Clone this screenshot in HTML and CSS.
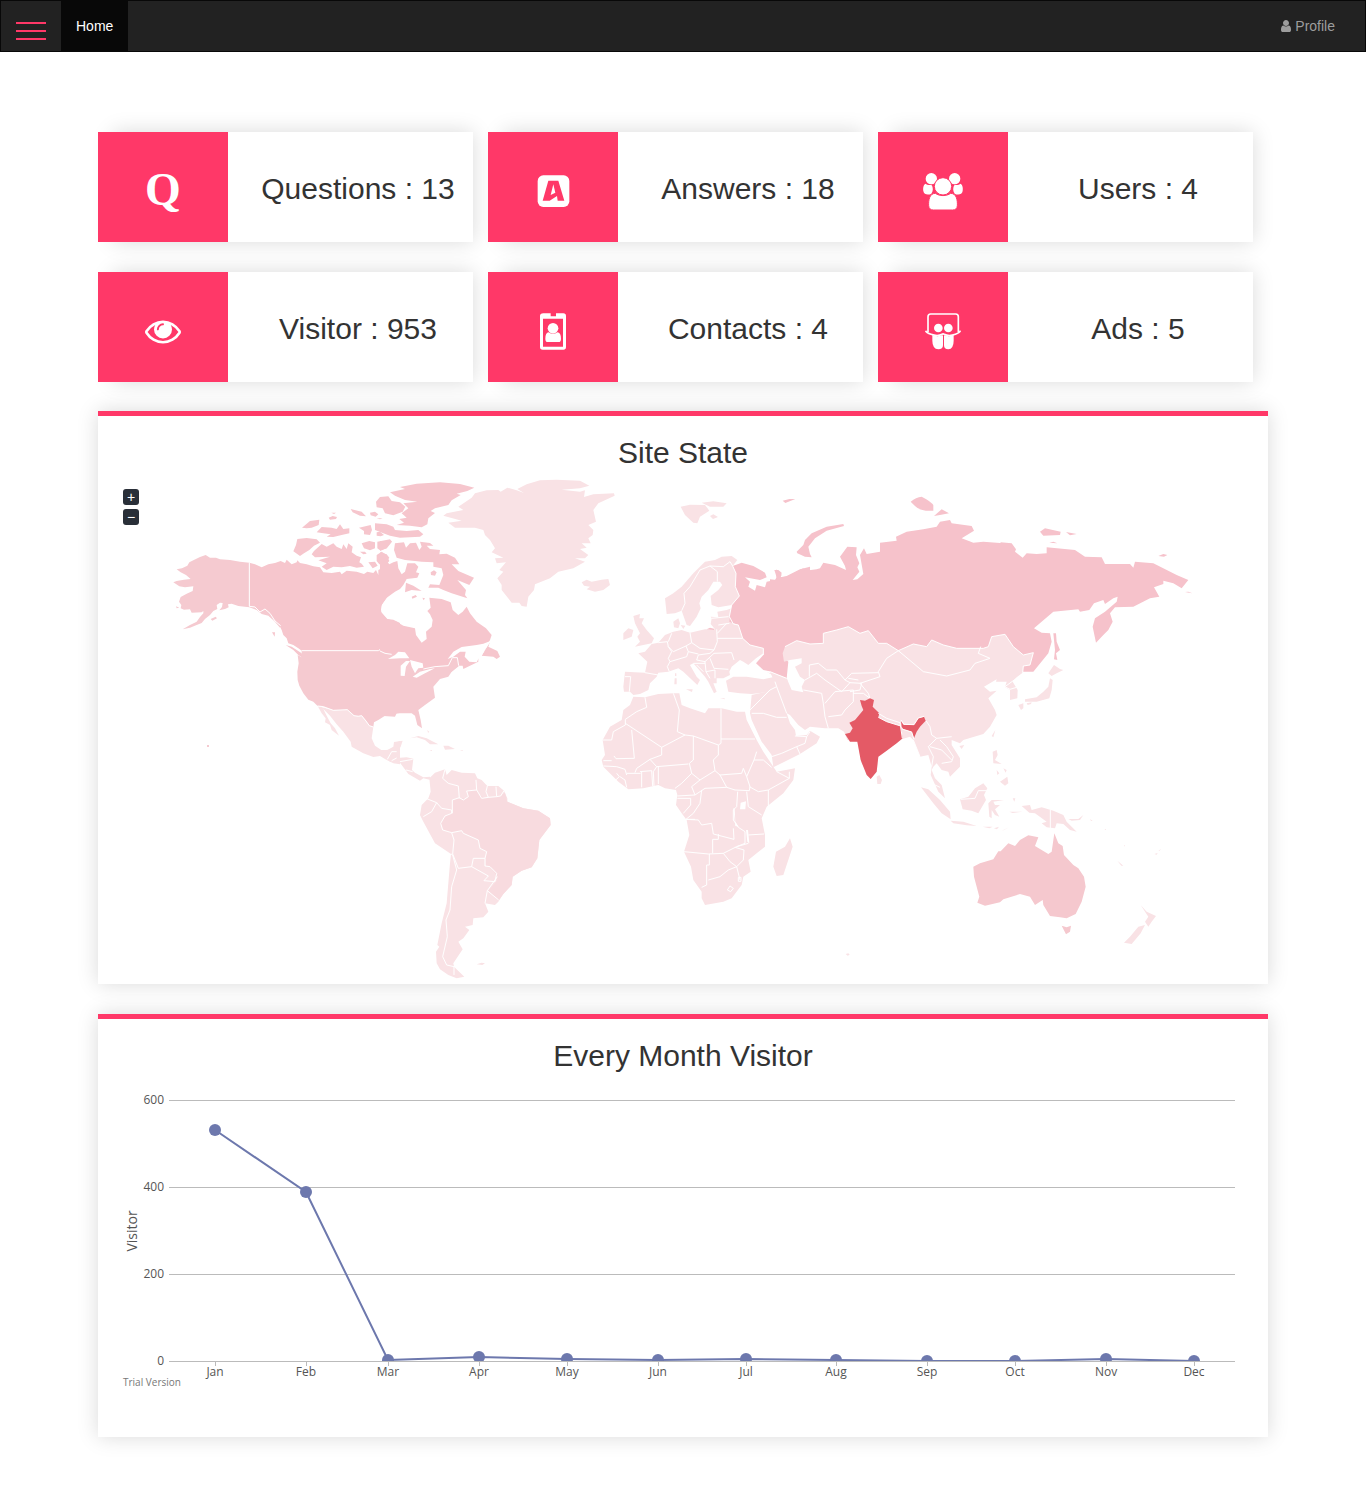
FILE: index.html
```
<!DOCTYPE html>
<html lang="en">
<head>
<meta charset="utf-8">
<title>Dashboard</title>
<meta name="viewport" content="width=device-width, initial-scale=1">
<link rel="stylesheet" href="styles.css">
</head>
<body>
<nav class="navbar">
  <button class="menu-toggle" type="button" aria-label="Menu"><span></span><span></span><span></span></button>
  <a class="nav-link active" href="#">Home</a>
  <a class="nav-link profile" href="#"><svg class="user-icon" viewBox="256 128 1280 1536" aria-hidden="true"><path d="M1536 1399q0 109-62.5 187t-150.5 78h-854q-88 0-150.5-78t-62.5-187q0-85 8.5-160.5t31.5-152 58.5-131 94-89 134.500-34.500q131 128 313 128t313-128q76 0 134.500 34.500t94 89 58.500 131 31.500 152 8.500 160.500zm-256-887q0 159-112.500 271.500t-271.500 112.500-271.500-112.500-112.500-271.500 112.500-271.500 271.500-112.500 271.500 112.500 112.500 271.500z"/></svg> Profile</a>
</nav>

<main class="container">
  <section class="stats">
    <article class="card">
      <div class="card-icon"><span class="letter-icon">Q</span></div>
      <h2 class="card-text">Questions : 13</h2>
    </article>
    <article class="card">
      <div class="card-icon"><svg viewBox="-7 0 120 120" aria-hidden="true"><rect x="7" y="16" width="95" height="95" rx="17"/><path class="cut" d="M39 32H69L87 92H67L65 78L43 92H22ZM54 43L46 75L60 68Z" fill-rule="evenodd"/></svg></div>
      <h2 class="card-text">Answers : 18</h2>
    </article>
    <article class="card">
      <div class="card-icon"><svg viewBox="0 -4 120 120" aria-hidden="true"><path d="M7 37C0 42 0 53 1 59C2 70 16 72 25 67C31 59 31 47 25 40C18 42 12 40 7 37ZM113 37C120 42 120 53 119 59C118 70 104 72 95 67C89 59 89 47 95 40C102 42 108 40 113 37Z"/><circle cx="25" cy="22" r="17"/><circle cx="95" cy="22" r="17"/><path class="ring" d="M37 66C50 75 70 75 83 66C101 66 104 88 103 103Q102 116 89 116H31Q18 116 17 103C16 88 19 66 37 66Z"/><circle class="ring" cx="60" cy="45" r="26"/></svg></div>
      <h2 class="card-text">Users : 4</h2>
    </article>
    <article class="card">
      <div class="card-icon"><svg class="eye" viewBox="0 -36 1792 1792" aria-hidden="true"><path d="M1664 960q-152-236-381-353 61 104 61 225 0 185-131.500 316.500t-316.500 131.500-316.500-131.500-131.500-316.500q0-121 61-225-229 117-381 353 133 205 333.500 326.500t434.500 121.500 434.500-121.500 333.500-326.500zm-720-384q0-20-14-34t-34-14q-125 0-214.500 89.500t-89.500 214.500q0 20 14 34t34 14 34-14 14-34q0-86 61-147t147-61q20 0 34-14t14-34zm848 384q0 34-20 69-140 230-376.500 368.500t-499.500 138.500-499.500-139-376.500-368q-20-35-20-69t20-69q140-229 376.500-368t499.500-139 499.500 139 376.500 368q20 35 20 69z"/></svg></div>
      <h2 class="card-text">Visitor : 953</h2>
    </article>
    <article class="card">
      <div class="card-icon"><svg viewBox="-6 -3 120 120" aria-hidden="true"><path fill-rule="evenodd" d="M25 7H47V16H63V7H85Q93 7 93 15V108Q93 116 85 116H23Q15 116 15 108V15Q15 7 25 7ZM24 23V107H84V23Z"/><circle cx="54" cy="52" r="16"/><path d="M41 64Q54 74 67 64Q78 65 78 83Q78 93 71 93H38Q31 93 31 83Q31 65 41 64Z"/></svg></div>
      <h2 class="card-text">Contacts : 4</h2>
    </article>
    <article class="card">
      <div class="card-icon"><svg viewBox="0 0 120 120" aria-hidden="true"><path class="line" d="M15 66V20Q15 12 23 12H98Q106 12 106 20V66M8 62Q10 68 24 73Q44 80 57 73Q60 70 64 73Q78 80 97 73Q111 68 112 62"/><path d="M28 75Q44 82 58 75L60 78V106Q60 118 46 118Q28 116 28 92ZM92 75Q77 82 65 75L63 78V106Q63 118 76 118Q92 116 92 92Z"/><circle cx="46" cy="54" r="13"/><circle cx="76" cy="54" r="13"/></svg></div>
      <h2 class="card-text">Ads : 5</h2>
    </article>
  </section>

  <section class="panel">
    <h2 class="panel-title">Site State</h2>
    <div class="map">
      <div class="zoom"><button type="button" aria-label="Zoom in">+</button><button type="button" aria-label="Zoom out">−</button></div>
      <svg class="drawing" viewBox="113 479 1140 500" role="img" aria-label="World map of visitors">
        <!-- Western North America -->
        <g transform="translate(160 475) scale(.333333)">
          <g class="canada">
            <path d="M268 263L285 268 305 277 325 268 345 264 362 258 375 264 380 254 395 268 410 262 412 256 420 264 440 268 460 274 480 277 490 292 515 294 540 290 545 298 560 287 590 290 612 297 622 290 640 294 648 285 655 300 655 285 668 278 670 290 680 297 695 280 705 268 712 285 720 288 720 340 700 348 692 356 680 368 668 384 662 395 664 412 680 432 700 434 720 444 720 536 700 535 680 530 668 532 660 524 655 528 425 527 415 520 400 510 385 505 380 490 370 480 365 465 360 455 345 440 330 420 315 404 300 412 285 396 268 394Z"/>
            <path d="M377 510L395 515 410 525 425 535 428 548 415 540 400 525ZM336 472H345L344 485ZM412 192L440 189 470 193 480 203 462 212 448 225 432 235 420 243 400 229 408 210ZM485 207L500 215 520 205 530 215 545 222 550 208 560 222 565 205 578 215 575 232 590 242 603 247 598 262 605 266 612 275 590 278 570 273 545 277 520 275 500 285 485 275 500 265 475 256 510 245 465 247 455 238 462 228Z"/>
            <path d="M426 158L450 138 478 134 476 150 455 158 440 160ZM470 172L485 156 515 158 530 162 540 148 550 162 568 160 568 175 545 180 520 186 500 185 512 178 490 175ZM514 113h14l-6 4zM506 128l12-5 13 3-3 6-18 2zM572 102L605 110 618 124 600 122 578 112zM630 113l15-3 10 8-8 7-15-4zM597 158L632 150 636 165 630 180 612 178 612 168zM650 172l10-2 12 10-10 4-12-2zM605 205L628 198 645 202 645 220 630 226 612 220zM652 200L690 193 696 200 680 220 660 226 652 220zM600 230h15l5 6-10 2zM625 262l20-2 8 12-15 8zM650 240L665 230 680 240 688 258 675 272 658 268 650 258zM650 130h18l-8 3z"/>
          </g>
          <g class="usa">
            <path d="M268 263L240 260 210 255 180 253 168 248 150 248 137 240 120 246 100 256 88 262 82 272 66 280 50 283 62 292 78 300 92 312 72 314 50 318 40 322 58 334 75 337 100 334 98 348 80 356 62 366 57 380 64 390 62 400 72 404 90 403 95 413 125 412 130 408 130 415 120 426 110 440 90 450 68 463 90 458 110 450 125 444 135 432 150 420 160 408 172 402 170 390 180 383 188 384 186 396 178 406 195 402 206 397 204 388 215 386 235 393 268 397 290 405 305 417 325 422 345 440 360 458 362 450 345 440 330 415 315 402 300 410 285 396 268 394ZM152 432l15-7 4 5-14 7zM141 810h6v6h-6zM48 394l10 4-8 2z"/>
            <path d="M425 527L655 528 660 524 668 532 690 540 684 552 700 555 720 545 720 714 705 716 700 722 675 722 655 735 642 742 640 756 628 752 618 738 605 722 595 724 582 722 562 704 545 706 520 706 490 695 473 693 460 680 445 674 430 655 418 632 413 615 412 590 416 565 413 540 425 547Z"/>
          </g>
          <path class="land" d="M473 693L520 706 562 704 582 722 605 722 628 752 640 756 635 790 645 812 665 826 690 824 703 815 706 803 720 798 720 868 700 865 680 855 660 843 640 846 610 835 575 815 572 800 550 770 530 748 510 722 490 702 500 722 512 745 525 760 537 782 515 765 510 750 495 742 497 730 485 715Z"/>
          <path class="border" d="M268 263V394L285 396 300 411 315 402 330 415 345 438 362 452M425 527H655L660 524 668 532 700 535M473 693L490 695 520 706 562 704 582 722 595 724 605 722 618 738 628 752 640 756"/>
        </g>
        <!-- Eastern North America and Greenland -->
        <g transform="translate(380 475) scale(.333333)">
          <g class="canada">
            <path d="M30 52L75 42 60 36 110 26 180 22 240 27 283 38 262 48 230 56 242 60 215 76 205 90 165 100 152 108 165 114 145 130 142 148 125 157 90 152 50 150 72 143 58 132 80 128 65 115 85 100 70 85 112 80 75 75 45 62ZM0 66L25 64 35 78 60 82 76 95 68 110 40 121 15 115 8 100-10 97-12 80ZM-15 145L20 148 40 155 45 165 80 168 115 165 130 178 120 185 60 188 30 182 10 175-15 165ZM0 198L35 198 20 220 0 228Z"/>
            <path d="M45 205L72 202 78 218 90 205 108 203 118 225 125 215 120 200 150 204 160 212 140 212 150 222 180 225 178 238 200 236 225 248 238 268 215 268 235 288 282 308 268 330 232 315 258 345 255 360 262 370 215 355 190 345 175 338 145 338 150 328 178 330 190 300 185 280 160 275 160 262 125 260 105 258 75 255 50 248 42 225Z"/>
            <path d="M0 232L20 238 28 248 20 258 28 268 40 262 52 258 55 280 65 298 75 290 82 265 105 265 115 275 108 292 118 295 112 308 80 312 70 330 60 342 45 350 20 368 5 390 2 410 22 432 50 440 70 452 105 460 108 480 125 503 140 492 138 470 155 455 158 435 150 418 142 408 152 398 148 368 185 372 212 382 218 405 235 420 248 410 260 395 270 415 290 440 318 460 335 480 330 495 315 525 295 545 295 560 270 572 250 582 248 572 235 572 215 590 130 600 0 600Z"/>
            <path d="M330 500L325 515 352 528 360 545 350 552 340 545 305 542 315 525ZM78 323L100 332 125 348 95 345 75 352ZM95 365l12-5 4 5-14 6zM127 368l8 2-4 6zM152 292l10-6 8 6-5 10-12-2z"/>
          </g>
          <path class="usa" d="M0 528L35 538 80 550 95 562 110 568 125 590 145 590 165 582 180 572 205 572 217 548 232 548 236 574 215 590 205 605 180 612 160 635 165 668 135 690 115 705 122 735 126 760 112 750 105 722 95 715 50 715 45 725 0 722Z"/>
          <path class="water" d="M24 552L45 540 55 530 75 532 88 550 60 550ZM62 572L78 558 90 558 78 575 74 603 62 602ZM90 555L128 565 130 578 115 580 105 595 95 575ZM98 605L120 590 150 582 165 580 135 595 110 608ZM203 552L220 530 245 516 290 510 310 506 333 497 315 525 305 542 295 552 290 562 268 560 254 545 257 530 240 530 220 545Z"/>
          <path class="border" d="M0 528L15 535 35 538M130 582L165 575 205 572 217 548 232 548 236 572"/>
          <g class="land">
            <path d="M412 42L440 28 480 16 530 14 600 17 628 32 600 40 545 44 600 50 615 46 612 66 640 58 702 55 704 62 655 85 640 105 648 140 625 150 640 165 638 180 625 190 632 205 605 205 620 218 600 222 625 240 615 250 585 250 615 260 580 280 535 290 510 310 465 328 462 345 445 365 440 395 425 393 418 383 395 383 375 358 365 345 365 330 352 310 370 290 358 285 378 262 350 265 345 250 370 248 335 232 345 220 330 195 315 180 310 165 285 158 225 158 205 143 245 137 190 122 200 115 250 105 235 95 275 68 285 55 320 46 355 45 362 50 382 38 410 46 432 54Z"/>
            <path d="M605 322L620 314 635 320 665 314 685 312 690 330 670 345 645 350 620 343 630 335 612 332ZM90 790L115 783 140 790 160 800 175 808 150 808 135 795 110 787ZM190 812L205 812 225 822 195 824ZM148 825h8v3zM240 825h8v3zM142 765l6 6-4 2z"/>
          </g>
        </g>
        <!-- Central and South America -->
        <g transform="translate(380 730) scale(.333333)">
          <path class="land" d="M0 60L22 60 40 50 42 36 68 32 62 50 55 62 50 84 80 82 100 86 96 120 105 128 130 142 150 140 152 150 130 145 120 152 85 132 78 122 60 98 30 95 15 80 0 72ZM148 145L165 128 195 118 200 135 215 120 245 128 285 130 292 145 305 150 322 168 355 168 372 182 382 205 382 215 430 235 475 242 510 265 512 285 478 330 472 385 455 412 425 422 398 440 395 465 370 492 355 515 345 525 315 520 325 545 310 562 280 565 278 585 255 590 268 600 250 625 235 635 248 658 220 700 222 710 253 740 230 745 205 735 180 718 170 700 168 665 178 650 172 645 185 580 200 520 210 400 213 372 165 340 130 275 120 255 125 225 145 205 152 185ZM290 703l15-5 10 2-8 5z"/>
          <path class="brazil" d="M217 210L238 205 262 205 262 182 290 180 300 195 315 205 345 200 360 198 375 188 382 215 430 235 475 242 510 265 512 285 478 330 472 385 455 412 425 422 398 440 395 465 370 492 355 512 325 482 352 450 345 430 330 410 318 408 318 365 300 355 295 330 250 310 245 302 215 308 190 300 180 280 195 258 215 250Z"/>
          <path class="border" d="M195 118L188 145 205 160 235 168 238 205M217 250V210L238 203 250 210 265 200 260 183 290 180 288 150M290 180L305 205 325 202 318 185 322 168M325 202L350 200 348 170M350 200L362 198 372 182M140 206L170 218 185 235 215 240V250L195 258 182 280 188 300 215 308 222 330 218 372 235 415 275 410 280 385 315 385 320 365 300 355 295 330 250 310 245 302 215 308M170 218L155 245 130 260M213 372L218 375 230 420 215 470 210 540 198 570 202 620 188 680 200 705 222 710V735M275 410L325 438 312 452 345 455 350 430 330 410 315 408V385M352 440L322 482 315 520M322 482L356 510M22 88L35 65H50M35 92L50 84M60 95L98 88M78 120L98 125"/>
        </g>
        <!-- Africa -->
        <g transform="translate(590 680) scale(.333333)">
          <path class="land" d="M130 50L165 52 205 42 250 40 268 40 275 75 300 85 345 100 355 85 395 85 440 95 465 95 470 120 500 180 520 215 550 260 560 275 615 265 610 300 580 340 530 380 515 415 525 465 525 500 500 520 475 540 482 575 460 590 455 615 425 655 400 665 345 675 335 655 335 635 310 600 303 560 282 515 298 465 290 420 275 400 258 375 262 345 258 330 225 325 205 315 160 325 115 328 85 305 55 275 40 260 35 240 45 225 38 180 60 140 95 120 100 90 120 75ZM600 475L608 500 580 585 560 588 550 560 558 515 585 500Z"/>
          <path class="water" d="M452 368L468 364 466 388 450 388ZM430 385L434 385 436 425 446 440 436 438ZM468 450L474 450 478 490 472 485Z"/>
          <path class="border" d="M165 52L170 82 140 95 106 118V135L70 155 65 180H38M106 130L215 202 285 165 262 155 268 90 250 40M125 150L133 235 78 236 72 228M215 202L215 225 180 238 140 265 135 278M285 165L310 168 385 195 393 190V85M393 177H495M310 168L310 240 298 250 305 280 330 300 375 272 370 240 385 225V195M180 238L200 260 295 252M200 260L190 275 192 318M150 275L185 272 188 318M155 275V322M110 280H152M205 260V312M255 325L275 310 305 280M262 348L315 345 305 320 330 300M315 345L345 325 410 322 435 330 478 332 480 320 470 290 460 265 455 280 390 285 375 272M390 285L410 322M470 290L492 240 520 240 545 262M492 240L500 215M478 320L505 335 535 330 598 295V275M535 330V378M598 295L560 275M443 335L440 380 430 390V420L445 442M470 335L475 380 515 405M335 330L330 370 310 400 288 418 325 420 335 435 365 430 370 462 432 478 430 445M262 355H302V375L280 400M288 418H315M282 515L355 522 400 520 440 500 465 490 465 455 445 442M385 462V478H368V520M358 522V555H350V615L335 622M355 600L390 590 415 570 440 560 450 600M400 520L420 545 440 560 460 540 462 510 435 502M475 465L522 462M440 500L475 490M412 630L420 618 430 625 422 635ZM445 592h8v12h-8zM80 280L88 290 75 302M90 290L105 300 110 322M40 242H65M40 258L80 260 105 268 110 285"/>
        </g>
        <!-- Europe -->
        <g transform="translate(590 490) scale(.333333)">
          <g class="land">
            <path d="M225 325L250 310 275 290 310 250 345 215 375 210 395 200 425 198 442 210 428 228 438 250 436 290 448 318 425 345 385 352 365 345 362 318 385 300 397 285 390 275 370 275 355 300 335 320 328 340 332 355 320 380 300 408 290 405 275 362 255 370 230 372ZM272 50L300 44 345 45 358 62 330 80 322 100 310 98 285 75ZM335 38L370 34 410 40 400 50 360 50ZM360 78l10-5 14 8-15 6zM250 395L265 385 270 400 265 415 252 412ZM272 405l14 2-6 10z"/>
            <path d="M130 378L150 372 148 385 162 385 155 400 170 420 192 445 185 460 135 470 150 455 142 440 150 430 135 400ZM100 430L115 415 130 420 125 440 100 450Z"/>
            <path d="M250 425L275 420 300 428 345 418 375 418 362 402 365 385 362 380 385 382 382 365 410 360 425 355 430 400 445 405 460 445 520 475 520 490 498 505 475 525 460 515 450 510 425 530 418 545 420 555 400 565 380 565 380 580 370 580 380 605 372 610 355 575 345 560 310 520 300 525 320 560 330 570 322 585 280 545 265 535 235 545 205 548 200 560 180 580 175 600 150 612 130 615 120 605 102 605 100 590 105 545 165 548 172 515 145 490 165 485 185 462 205 458 225 435ZM408 572L430 560 470 560 520 568 555 560 530 545 590 562 600 605 570 600 545 605 485 612 450 610 415 605ZM288 598h20l-2 8zM254 565h6v18h-7zM255 550h4v8h-4zM390 625h14v3z"/>
          </g>
          <path class="russia" d="M428 228L455 218 490 228 525 248 530 262 510 270 465 262 480 275 475 290 495 302 500 285 525 292 530 275 555 270 560 262 553 240 565 240 575 248 572 262 590 258 630 238 660 230V450L612 455 580 480 580 500 595 515 590 565 560 548 520 540 498 520 520 495 520 475 480 465 458 445 445 405 418 395 420 370 425 345 448 318 436 290 438 250ZM350 418l10-5 12 3v4z"/>
          <path class="border" d="M275 362L285 340 282 310 300 290 330 240 360 228 382 245V275M360 228L400 230 420 215 428 228 438 250 436 290 448 318 425 345 418 380 430 402 445 405 458 445 480 465 520 475 520 495M300 428L305 458 288 468 295 485M305 458L330 475 372 480 382 455 380 418M382 445L458 445M385 405L418 400M365 385L415 380M410 400L382 430M372 480L360 490 325 495 320 510 345 515 372 490 425 488 432 510M360 505L372 535 415 538M345 515L348 545 375 540V565M348 545L360 565M295 485L325 492M288 468L250 485 235 470 232 455 205 458M235 470L245 485 235 505 240 515 290 500 295 485M240 515L232 530 238 545M165 548L205 555M105 560L122 560 118 605M310 520L345 520M320 525L340 545M560 575V600M530 545L590 562M235 455L245 430"/>
        </g>
        <!-- Asia -->
        <g transform="translate(770 480) scale(.333333)">
          <g class="russia">
            <path d="M0 298L20 300 18 268 35 285 30 292 50 290 100 265 105 272 140 268 150 265 160 248 195 255 228 270 225 258 210 230 232 200 260 202 258 225 268 250 262 262 268 275 248 300 262 298 280 282 270 225 282 205 290 222 330 215 330 188 380 182 378 170 410 155 460 148 500 140 510 125 540 120 545 130 605 138 612 152 575 175 610 188 640 185 700 190V520L620 520 45 520 50 595 0 575Z"/>
            <path d="M80 215L100 195 105 180 125 160 170 140 220 132 222 138 170 152 135 175 115 200 120 222 125 232 105 230 82 220ZM422 65Q438 52 455 50Q485 65 490 76L490 92Q450 95 435 78ZM492 108L515 88 537 100 510 105ZM38 62l20-5h18l-30 12z"/>
          </g>
          <g class="russia" transform="translate(600 30)">
            <path d="M-30 158L0 155 8 162 50 160 55 167 90 167 92 157 125 160 138 178 135 185 158 203 170 190 200 192 230 190 230 172 315 180 345 200 395 202 405 222 480 222 490 233 495 215 550 220 620 255 655 270 635 295 610 280 580 272 580 282 552 292 568 320 540 325 490 350 435 352 420 370 428 395 415 420 400 435 378 458 368 410 375 385 405 365 440 335 443 320 430 325 405 342 400 330 372 340 358 360 330 365 325 358 250 365 192 415 215 428 240 430 245 455 235 490 190 545 160 545 60 490-30 490Z"/>
            <path d="M250 430L258 430 260 455 270 480 258 490 262 510 252 508 255 480ZM210 125L225 115 272 125 270 135 220 137ZM288 126L320 132 300 136ZM238 158l12-3 12 5zM565 198l15-6 12 3-10 5zM645 306l10-1 12 5z"/>
          </g>
          <path class="land" d="M45 500L80 482 120 492 160 490 160 460 200 450 235 440 270 460 295 452 325 490 350 490 385 512 430 492 470 500 485 480 520 495 560 505 640 505 655 500 665 470 705 463 730 500 760 525 790 518 780 555 760 558 758 578 740 592 728 605 743 630 742 655 720 660 720 630 705 622 710 605 678 605 680 598 642 620 660 635 680 632 655 655 675 690 680 705 660 740 640 762 580 780 570 790 545 780 545 795 570 835 570 860 540 890 535 875 515 870 500 850 490 860 485 870 495 895 515 915 525 955 505 935 482 885 485 860 475 825 450 830 430 780 420 770 395 778 380 790 325 830 320 875 302 897 275 850 262 785 232 780 222 755 205 745 165 745 120 740 105 750 85 735 60 705 50 700 60 730 75 750 78 768 110 765 120 752 150 770 140 790 90 822 10 862 5 825-25 785-55 720-60 700-55 645-10 635 15 610 0 575 50 595 65 630 100 637 95 620 105 600 90 590 75 560 95 550 95 535 60 540 42 545 38 520ZM320 890l8-5 8 15-4 12h-10zM568 798l15-3-8 12z"/>
          <g class="land" transform="translate(600 30)">
            <path d="M235 550L252 525 270 537 280 540 260 550 245 558ZM240 565L248 570 245 600 238 625 200 635 165 635 165 628 200 622 220 605 235 590ZM145 645L160 640 160 655 153 660ZM170 640l15-3-2 5-10 3z"/>
          </g>
          <path class="border" d="M45 500L80 482 120 492 160 490 160 460 200 450 235 440 270 460 295 452 325 490 350 490 385 512 430 492 470 500 485 480 520 495 560 505 640 505 655 500 665 470 705 463 730 500 760 525 790 518 780 555 760 558 758 578M385 512L460 575 530 588 600 570 615 550 660 535 625 520 632 500M385 512L350 535 325 575 330 590 270 610 295 640 300 655M118 590V555L145 550 170 570 200 570 225 600 245 580 325 578M105 600L140 580 165 600 215 635 240 608 225 600M100 630L155 640 160 670 165 710 175 745M165 670L195 635 250 630 250 665 225 690 215 705 175 710M240 608L275 610 270 630 240 635M235 595L265 600M250 640L280 640 300 655M0 575L50 595M-60 690L0 630 20 620 50 700M20 620L15 605M0 630L-20 650M-55 700L-20 700 20 712 50 712M75 768L110 770 120 755M5 830L35 820 80 800 105 790 110 770M80 800L90 822M450 830L430 780M468 722L480 740 485 765 500 775 475 800 490 830 485 860M500 775L545 770M510 780L530 800 550 830 545 845 515 850M480 800L515 810 545 840M700 618L720 628 740 622M705 620L760 580"/>
          <path class="india" d="M270 660L285 662 300 655 312 660 308 680 328 700 325 712 350 725 392 738 398 775 380 790 350 812 325 830 320 875 302 897 290 885 272 840 262 785 240 785 225 762 240 758 248 745 238 728 255 720 280 690 275 678ZM393 722L400 734 432 735 445 715 462 710 467 722 450 740 440 755 432 775 425 755 400 748 395 740Z"/>
          <path class="border" d="M325 700L350 715 390 728 397 775M325 712L350 725 392 738M393 720L402 733 432 734 445 714 462 709M396 747L425 756 432 778"/>
        </g>
        <!-- South-east Asia and Oceania -->
        <g transform="translate(900 720) scale(.333333)">
          <path class="australia" d="M220 440L240 430 280 418 295 394 302 394 325 370 345 378 360 360 385 346 415 352 405 378 445 402 455 395 463 340 475 370 488 378 492 405 520 435 535 445 552 470 557 500 545 545 527 582 500 595 480 592 450 588 430 555 428 540 405 555 390 530 360 522 310 538 300 547 255 557 232 548 238 530 222 470ZM485 617L500 622 513 617 510 635 498 643Z"/>
          <path class="land" d="M63 202L85 208 120 240 150 275 152 298 125 280 100 250ZM152 302L190 305 230 318 200 316 160 310ZM248 320h30l-10 5zM282 325l15-5-6 8zM305 332l22-10-15 8zM180 238L205 230 225 205 250 190 262 205 252 225 258 240 235 280 215 272 188 268ZM265 250L275 240 312 240 280 245 285 255 300 255 285 268 298 290 285 285 275 270 275 295 268 290ZM338 235h8l-3 10zM328 275h40l-30 4zM365 258L390 255 395 270 425 262 460 272 490 285 500 305 530 335 510 330 490 312 470 310 465 325 440 322 425 310 440 305 405 280 388 278ZM278 95L290 90 293 105 285 120 305 132 280 130ZM290 150l8 10-6 5zM310 145l10 5-3 8zM300 185L322 170 325 190 315 197ZM505 297L535 297 550 285 540 300 515 302ZM275 48L286 30 280 52ZM722 555L740 575 768 588 755 605 745 620 735 605 745 590ZM735 615L722 640 695 672 672 668 690 650 715 620ZM652 422l18 15-6 0zM763 402l10-3-3 5zM775 392l8-5-4 5zM570 297l8 6-5 0zM613 327h5v3zM672 376h3v4zM-163 702l8-2 4 4-6 3z"/>
          <path class="border" d="M451 270V325M182 238L225 235 235 212 260 212M105 195L120 202"/>
        </g>
      </svg>
    </div>
  </section>

  <section class="panel">
    <h2 class="panel-title">Every Month Visitor</h2>
    <svg class="drawing chart" viewBox="113 1082 1140 350" role="img" aria-label="Visitors per month">
      <defs><clipPath id="plot"><rect x="169" y="1090" width="1066" height="271"/></clipPath></defs>
      <path class="grid" d="M169 1100.500H1235M169 1187.500H1235M169 1274.500H1235M169 1361.500H1235"/>
      <path class="grid" d="M215.500 1361V1366M306.500 1361V1366M388.500 1361V1366M479.500 1361V1366M567.500 1361V1366M658.500 1361V1366M746.500 1361V1366M836.500 1361V1366M927.500 1361V1366M1015.500 1361V1366M1106.500 1361V1366M1194.500 1361V1366"/>
      <g clip-path="url(#plot)">
        <polyline class="series" points="215,1130 306,1192 388,1360 479,1357 567,1359 658,1360 746,1359 836,1360 927,1361 1015,1361 1106,1359 1194,1361"/>
        <g class="dots"><circle cx="215" cy="1130" r="6"/><circle cx="306" cy="1192" r="6"/><circle cx="388" cy="1360" r="6"/><circle cx="479" cy="1357" r="6"/><circle cx="567" cy="1359" r="6"/><circle cx="658" cy="1360" r="6"/><circle cx="746" cy="1359" r="6"/><circle cx="836" cy="1360" r="6"/><circle cx="927" cy="1361" r="6"/><circle cx="1015" cy="1361" r="6"/><circle cx="1106" cy="1359" r="6"/><circle cx="1194" cy="1361" r="6"/></g>
      </g>
      <g class="y-labels"><text x="164" y="1104">600</text><text x="164" y="1191">400</text><text x="164" y="1278">200</text><text x="164" y="1365">0</text></g>
      <g class="x-labels"><text x="215" y="1376">Jan</text><text x="306" y="1376">Feb</text><text x="388" y="1376">Mar</text><text x="479" y="1376">Apr</text><text x="567" y="1376">May</text><text x="658" y="1376">Jun</text><text x="746" y="1376">Jul</text><text x="836" y="1376">Aug</text><text x="927" y="1376">Sep</text><text x="1015" y="1376">Oct</text><text x="1106" y="1376">Nov</text><text x="1194" y="1376">Dec</text></g>
      <text class="axis-title" transform="translate(137 1231) rotate(-90)">Visitor</text>
      <text class="credit" x="123" y="1386">Trial Version</text>
    </svg>
  </section>
</main>
</body>
</html>
```
FILE: styles.css
```
* { box-sizing: border-box; }

body {
  margin: 0;
  background: #fff;
  color: #333;
  font: 14px/20px "Liberation Sans", Arial, sans-serif;
}

h2 {
  margin: 0;
  font-size: 30px;
  line-height: 33px;
  font-weight: 400;
}

.navbar {
  display: flex;
  height: 52px;
  padding-right: 15px;
  background: #222;
  border: 1px solid #080808;
}

.menu-toggle {
  display: flex;
  flex-direction: column;
  gap: 6px;
  width: 60px;
  padding: 21px 15px 0;
  background: none;
  border: 0;
  cursor: pointer;
}

.menu-toggle span {
  width: 30px;
  height: 2px;
  background: #ff3868;
}

.nav-link {
  padding: 15px;
  color: #9d9d9d;
  text-decoration: none;
}

.nav-link.active {
  color: #fff;
  background: #080808;
}

.profile { margin-left: auto; }

.user-icon {
  width: 10px;
  height: 12px;
  fill: currentColor;
  vertical-align: -1px;
}

.container {
  max-width: 1170px;
  margin: 80px auto 50px;
}

.stats {
  display: grid;
  grid-template-columns: repeat(3, 1fr);
  gap: 30px 15px;
  padding-right: 15px;
  margin-bottom: 29px;
}

.card {
  display: flex;
  height: 110px;
  margin-left: 15px;
  background: #fff;
  box-shadow: 0 0 20px rgba(0, 0, 0, .15);
}

.card-icon {
  display: flex;
  flex: 0 0 130px;
  align-items: center;
  justify-content: center;
  margin-left: -15px;
  padding-top: 6px;
  background: #ff3868;
}

.card-icon svg {
  width: 40px;
  height: 40px;
  fill: #fff;
}

.card-icon .eye {
  width: 36px;
  height: 36px;
}

.card-icon .cut { fill: #ff3868; }
.card-icon .ring { stroke: #ff3868; stroke-width: 3; }
.card-icon .line { fill: none; stroke: #fff; stroke-width: 5; }

.letter-icon {
  color: #fff;
  font: bold 46px/46px "Liberation Serif", serif;
}

.card-text {
  flex: 1;
  align-self: center;
  padding: 2px 0 0 15px;
  text-align: center;
  white-space: nowrap;
}

.panel {
  margin-bottom: 30px;
  padding: 20px 15px 5px;
  background: #fff;
  border-top: 5px solid #ff3868;
  box-shadow: 0 0 20px rgba(0, 0, 0, .15);
}

.panel-title {
  margin-bottom: 10px;
  text-align: center;
}

.map { position: relative; }

.zoom {
  position: absolute;
  top: 10px;
  left: 10px;
  display: grid;
  gap: 4px;
}

.zoom button {
  width: 16px;
  height: 16px;
  padding: 0;
  color: #fff;
  background: #292f38;
  border: 0;
  border-radius: 3px;
  font: 14px/16px "Liberation Sans", Arial, sans-serif;
}

.drawing {
  display: block;
  width: 100%;
  height: auto;
}

.land { fill: #f9e2e5; }
.canada { fill: #f6c6cd; }
.usa { fill: #f5cad0; }
.brazil { fill: #f8dbdf; }
.russia { fill: #f6c2cb; }
.australia { fill: #f5c8ce; }
.india { fill: #e45a66; }
.water { fill: #fff; }

.border {
  fill: none;
  stroke: #fff;
  stroke-width: 3;
  stroke-linejoin: round;
}

.grid {
  fill: none;
  stroke: #bbb;
}

.series {
  fill: none;
  stroke: #6d78ad;
  stroke-width: 2;
}

.dots { fill: #6d78ad; }

.chart text {
  font-family: "Open Sans", "Noto Sans", sans-serif;
  fill: #555;
}

.chart .y-labels {
  font-size: 12px;
  text-anchor: end;
}

.chart .x-labels {
  font-size: 12px;
  text-anchor: middle;
}

.chart .axis-title {
  font-size: 14px;
  text-anchor: middle;
}

.chart .credit {
  font-size: 10px;
  fill: #777;
}
```
